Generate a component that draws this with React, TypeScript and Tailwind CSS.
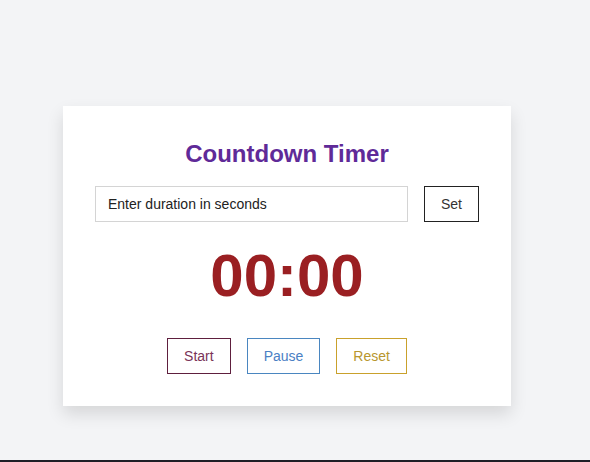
export default function App() {
  return (
    <div
      className="min-h-[462px] bg-[#f3f4f6] flex flex-col"
      style={{ fontFamily: '"Liberation Sans", Arial, sans-serif' }}
    >
      <div className="flex-1 pt-[106px] pl-[63px]">
        {/* Timer card */}
        <div className="w-[448px] bg-white p-8 shadow-[0_8px_16px_rgba(0,0,0,0.12)]">
          <h1 className="text-2xl font-bold text-center text-[#5f2a98] mb-4">
            Countdown Timer
          </h1>

          <div className="flex gap-4">
            <input
              type="number"
              placeholder="Enter duration in seconds"
              className="flex-1 h-9 px-3 text-sm border border-[#d4d4d4] outline-none placeholder:text-[#222]"
            />
            <button className="h-9 px-4 text-sm text-[#333] border border-[#222]">
              Set
            </button>
          </div>

          <div className="my-6 mb-8 text-6xl leading-none font-bold text-center text-[#9a1f22]">
            00:00
          </div>

          <div className="flex justify-center gap-4">
            <button className="h-9 px-4 text-sm text-[#7a3358] border border-[#5e1f3e]">
              Start
            </button>
            <button className="h-9 px-4 text-sm text-[#4a80c4] border border-[#4a86c0]">
              Pause
            </button>
            <button className="h-9 px-4 text-sm text-[#b8962e] border border-[#c9a12c]">
              Reset
            </button>
          </div>
        </div>
      </div>
      <div className="h-[2px] bg-[#1e1e26]" />
    </div>
  );
}
